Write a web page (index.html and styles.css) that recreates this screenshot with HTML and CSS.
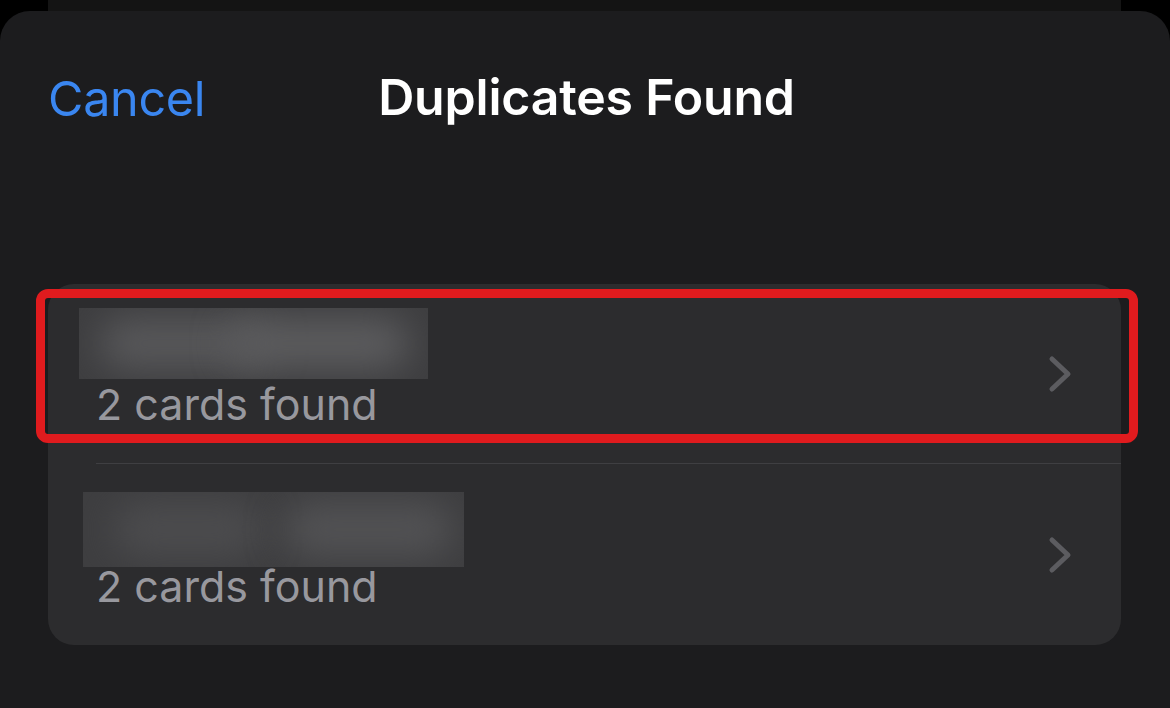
FILE: index.html
```html
<!doctype html>
<html>
    <head>
        <meta charset="utf-8"/>
        <link rel="stylesheet" href="styles.css">
    </head>
    <body>
        <div class="back-sheet"></div>
        <main class="sheet">
            <header class="nav">
                <a class="cancel">Cancel</a>
                <h1 class="title">Duplicates Found</h1>
            </header>
            <section class="card">
                <div class="row row-first">
                    <div class="row-text">
                        <div class="blur blur-a"><span></span><span></span></div>
                        <div class="count">2 cards found</div>
                    </div>
                    <svg class="chevron" width="26" height="38" viewBox="0 0 26 38">
                        <path d="M4 4 L20 19 L4 34" fill="none" stroke="currentColor" stroke-width="5" stroke-linecap="round" stroke-linejoin="round"/>
                    </svg>
                </div>
                <div class="row row-second">
                    <div class="row-text">
                        <div class="blur blur-b"><span></span><span></span></div>
                        <div class="count">2 cards found</div>
                    </div>
                    <svg class="chevron" width="26" height="38" viewBox="0 0 26 38">
                        <path d="M4 4 L20 19 L4 34" fill="none" stroke="currentColor" stroke-width="5" stroke-linecap="round" stroke-linejoin="round"/>
                    </svg>
                </div>
                <div class="highlight"></div>
            </section>
        </main>
    </body>
</html>
```

FILE: styles.css
```css
:root {
    --black: #000000;
    --back: #141414;
    --sheet: #1c1c1e;
    --card: #2c2c2e;
    --sep: #3f3f42;
    --blue: #3a86f0;
    --label: #ffffff;
    --secondary: #98989e;
    --chevron: #5c5c60;
    --red: #e01b1e;
}

html, body {
    margin: 0;
    height: 100%;
}

body {
    background: var(--black);
    font-family: Inter, "Noto Sans", sans-serif;
    overflow: hidden;
}

.back-sheet {
    height: 11px;
    margin: 0 49px 0 48px;
    background: var(--back);
}

.sheet {
    height: 697px;
    background: var(--sheet);
    border-radius: 30px 30px 0 0;
}

.nav {
    display: flex;
    justify-content: center;
    position: relative;
    height: 170px;
}

.cancel {
    position: absolute;
    left: 48px;
    top: 58px;
    color: var(--blue);
    font-size: 48.5px;
    letter-spacing: -0.3px;
}

.title {
    margin: 56px 0 0 3px;
    color: var(--label);
    font-size: 50px;
    font-weight: 600;
    letter-spacing: -0.2px;
}

.card {
    position: relative;
    margin: 103px 49px 0 48px;
    background: var(--card);
    border-radius: 26px;
}

.row {
    display: flex;
    align-items: flex-start;
    height: 180px;
    padding-right: 47px;
    box-sizing: border-box;
}

.row-first {
    position: relative;
    padding-top: 24px;
}

.row-first::after {
    content: "";
    position: absolute;
    left: 48px;
    right: 0;
    bottom: 0;
    height: 1.5px;
    background: var(--sep);
}

.row-second {
    height: 181px;
    padding-top: 28px;
}

.row-text {
    flex: 1;
    padding-left: 48px;
}

.blur {
    position: relative;
    overflow: hidden;
    background: #3e3e40;
}

.blur span {
    position: absolute;
    top: 10px;
    bottom: 10px;
    border-radius: 40px;
    background: #58585a;
    filter: blur(18px);
}

.blur-a {
    width: 349px;
    height: 71px;
    margin-left: -17px;
}

.blur-a span:first-child { left: 20px; width: 170px; }
.blur-a span:last-child { left: 150px; width: 180px; background: #5c5c5e; }

.blur-b {
    width: 381px;
    height: 75px;
    margin-left: -13px;
}

.blur-b span:first-child { left: 30px; width: 150px; background: #4c4c4e; }
.blur-b span:last-child { left: 200px; width: 170px; background: #525254; }

.count {
    color: var(--secondary);
    font-size: 43px;
    line-height: 52px;
}

.row-first .count {
    margin-top: -1px;
}

.row-second .count {
    margin-top: -7px;
}

.chevron {
    align-self: center;
    color: var(--chevron);
}

.row-first .chevron {
    margin-top: -24px;
}

.row-second .chevron {
    margin-top: -28px;
}

.highlight {
    position: absolute;
    left: -12px;
    top: 5px;
    width: 1084px;
    height: 136px;
    border: 9px solid var(--red);
    border-radius: 12px;
}
```
